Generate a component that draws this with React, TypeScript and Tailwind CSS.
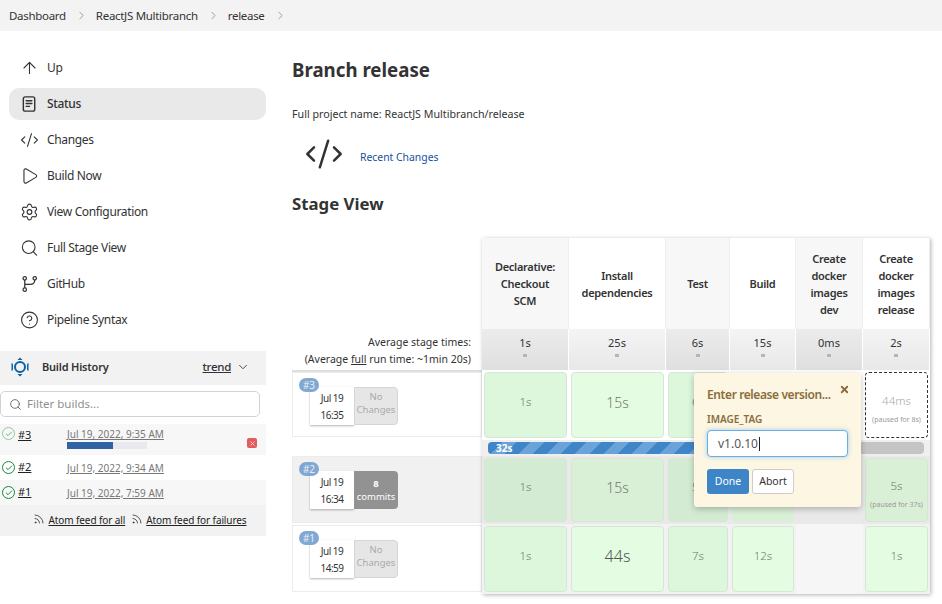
import { ArrowUp, CodeXml, Play, Settings, Search, CircleHelp, ChevronRight, ChevronDown, Rss, Check, X } from 'lucide-react';

const font = { fontFamily: '"Noto Sans", "Open Sans", sans-serif' };

function StatusIcon() {
  return (
    <svg width="20" height="20" viewBox="0 0 20 20" fill="none" stroke="#333" strokeWidth="1.5" strokeLinecap="round">
      <rect x="3.5" y="2.5" width="12" height="15" rx="2" />
      <path d="M6.5 6.5h6M6.5 9.5h6M6.5 12.5h3.5" />
    </svg>
  );
}

function BranchIcon() {
  return (
    <svg width="20" height="20" viewBox="0 0 20 20" fill="none" stroke="#333" strokeWidth="1.3">
      <circle cx="5" cy="4" r="1.8" />
      <circle cx="5" cy="16" r="1.8" />
      <circle cx="15.5" cy="4" r="1.8" />
      <path d="M5 5.8v8.4M15.5 5.8c0 3.2-2 4.7-5 4.7H5" />
    </svg>
  );
}

function HistoryIcon() {
  return (
    <svg width="20" height="20" viewBox="0 0 20 20" fill="#0b62a4">
      <circle cx="10" cy="10" r="5" fill="none" stroke="#0b62a4" strokeWidth="2" />
      <path d="M10 0.5l2.5 2.5h-5zM10 19.5l2.5-2.5h-5z" />
      <path d="M1.5 6l1.5 1v6l-1.5 1zM18.5 6l-1.5 1v6l1.5 1z" />
    </svg>
  );
}

const navItems = [
  { label: 'Up', icon: <ArrowUp size={20} strokeWidth={1.4} /> },
  { label: 'Status', icon: <StatusIcon />, active: true },
  { label: 'Changes', icon: <CodeXml size={20} strokeWidth={1.4} /> },
  { label: 'Build Now', icon: <Play size={20} strokeWidth={1.4} /> },
  { label: 'View Configuration', icon: <Settings size={20} strokeWidth={1.4} /> },
  { label: 'Full Stage View', icon: <Search size={20} strokeWidth={1.4} /> },
  { label: 'GitHub', icon: <BranchIcon /> },
  { label: 'Pipeline Syntax', icon: <CircleHelp size={20} strokeWidth={1.4} /> },
];

const stages = [
  { name: 'Declarative: Checkout SCM', avg: '1s', bg: 'bg-[#f7f7f7]' },
  { name: 'Install dependencies', avg: '25s', bg: 'bg-white' },
  { name: 'Test', avg: '6s', bg: 'bg-[#f7f7f7]' },
  { name: 'Build', avg: '15s', bg: 'bg-white' },
  { name: 'Create docker images dev', avg: '0ms', bg: 'bg-[#f7f7f7]' },
  { name: 'Create docker images release', avg: '2s', bg: 'bg-white' },
];

function Crumb({ label }: { label: string }) {
  return (
    <div className="flex items-center gap-[9px]">
      <span>{label}</span>
      <ChevronRight size={13} strokeWidth={1.5} className="text-[#8a8a8a]" />
    </div>
  );
}

function BuildRow({ num, date, pct, cancel, shaded }: { num: string; date: string; pct?: number; cancel?: boolean; shaded?: boolean }) {
  return (
    <div className={`flex ${pct ? 'h-[31px] items-start pt-[3px]' : 'h-[25px] items-center'} ${shaded ? 'bg-[#f7f7f7]' : 'bg-white'} pl-[2px] pr-[9px]`}>
      <span className={`flex h-[13px] w-[13px] shrink-0 items-center justify-center rounded-full border-[1.5px] ${pct ? 'border-[#8fc9a4]' : 'border-[#138a3d]'}`}>
        <Check size={8} strokeWidth={3} className={pct ? 'text-[#6fb488]' : 'text-[#138a3d]'} />
      </span>
      <span className="ml-[3px] w-[49px] text-[11px] text-[#222] underline">{num}</span>
      <div className="flex-1">
        <div className="text-[10px] leading-[14px] text-[#777] underline">{date}</div>
        {pct ? (
          <div className="mt-[1px] h-[7px] w-[80px] bg-[#e9eaee]">
            <div className="h-full bg-[#2f63a3]" style={{ width: `${pct}%` }} />
          </div>
        ) : null}
      </div>
      {cancel ? (
        <span className="mt-[11px] flex h-[10px] w-[10px] items-center justify-center rounded-[2px] bg-[#e25c5c]">
          <X size={7} strokeWidth={3} className="text-[#f4d6d6]" />
        </span>
      ) : null}
    </div>
  );
}

function BuildLabel({ num, time, commits, shaded, short }: { num: string; time: string; commits?: boolean; shaded?: boolean; short?: boolean }) {
  return (
    <div className={`relative ${short ? 'h-[65px]' : 'h-[67px]'} border border-[#ececec] pl-[17px] pt-[14px] ${shaded ? 'bg-[#f1f1f1]' : 'bg-white'}`}>
      <span className="absolute left-[6px] top-[5px] z-10 flex h-[14px] w-[20px] items-center justify-center rounded-full bg-[#80a8d2] text-[10px] text-[#e8eef6]">{num}</span>
      <div className="flex h-[38px] w-[88px]">
        <div className="flex w-[44px] flex-col items-center justify-center gap-[1px] bg-white text-[10px] leading-[16px] tracking-[-0.5px] text-[#333] shadow-[0_1px_2px_rgba(0,0,0,0.3)]">
          <span>Jul 19</span>
          <span>{time}</span>
        </div>
        {commits ? (
          <div className="flex w-[44px] flex-col items-center justify-center rounded-r-[4px] bg-[#929292] text-[9.5px] leading-[13px] text-white">
            <span className="font-bold">8</span>
            <span>commits</span>
          </div>
        ) : (
          <div className="flex w-[44px] flex-col items-center justify-center rounded-r-[4px] border border-[#d5d5d5] bg-[#e6e6e6] pb-[6px] text-[9.5px] leading-[13px] text-[#aaa]">
            <span>No</span>
            <span>Changes</span>
          </div>
        )}
      </div>
    </div>
  );
}

function Cell({ t, tone, size, note, dashed }: { t?: string; tone: string; size?: 'mid' | 'big'; note?: string; dashed?: boolean }) {
  const text = size === 'big' ? 'text-[16px] text-[#555]' : size === 'mid' ? 'text-[14px] text-[#6f7a6f]' : 'text-[11.5px] text-[#6f7a6f]';
  return (
    <div className="p-[2px]">
      <div
        className={`flex h-full flex-col items-center justify-center rounded-[4px] ${note ? 'pt-[8px]' : 'pb-[6px]'} ${
          dashed ? 'border border-dashed border-[#333] bg-white' : t ? 'border border-[#d6e6d4]' : ''
        } ${tone}`}
      >
        <span className={`${text} font-light ${dashed ? 'text-[#aaa]' : ''}`}>{t}</span>
        {note ? <span className="mt-[6px] text-[7px] text-[#999]">{note}</span> : null}
      </div>
    </div>
  );
}

export default function App() {
  return (
    <div style={font} className="relative h-[604px] w-[942px] overflow-hidden bg-white text-[#333]">
      <header className="flex h-[31px] items-center gap-[8px] bg-[#f3f3f3] pl-[9px] text-[11.5px] tracking-[-0.3px] text-[#333]">
        <Crumb label="Dashboard" />
        <Crumb label="ReactJS Multibranch" />
        <Crumb label="release" />
      </header>

      <div className="flex">
        <aside className="w-[266px] shrink-0">
          <nav className="pl-[9px] pt-[21px]">
            {navItems.map((item) => (
              <div
                key={item.label}
                className={`mb-[4px] flex h-[32px] items-center gap-[8px] rounded-[10px] pl-[11px] text-[12px] tracking-[-0.35px] ${
                  item.active ? 'bg-[#e9e9e9] font-medium' : ''
                }`}
              >
                <span className="flex w-[19px] justify-center">{item.icon}</span>
                <span>{item.label}</span>
              </div>
            ))}
          </nav>

          <div className="mt-[15px] flex h-[34px] items-center bg-[#f2f2f2] pb-[2px] pl-[10px] pr-[16px]">
            <HistoryIcon />
            <span className="ml-[12px] flex-1 text-[11px] font-semibold tracking-[-0.2px] text-[#333]">Build History</span>
            <span className="mr-[5px] text-[11.5px] font-medium tracking-[-0.3px] underline">trend</span>
            <ChevronDown size={14} strokeWidth={1.5} />
          </div>
          <div className="mt-[6px] flex h-[26px] w-[260px] items-center gap-[5px] rounded-[5px] border border-[#cfd3d8] pl-[8px] text-[11.5px] text-[#8f8f8f]">
            <Search size={13} strokeWidth={1.5} className="text-[#555]" />
            <span>Filter builds...</span>
          </div>
          <div className="mt-[7px]">
            <BuildRow num="#3" date="Jul 19, 2022, 9:35 AM" pct={57} cancel shaded />
            <BuildRow num="#2" date="Jul 19, 2022, 9:34 AM" />
            <BuildRow num="#1" date="Jul 19, 2022, 7:59 AM" shaded />
          </div>
          <div className="flex h-[31px] items-center justify-center gap-[6px] bg-[#f2f2f2] pl-[14px] text-[10px] tracking-[-0.1px] text-[#222]">
            <span className="flex items-center gap-[3px]">
              <Rss size={12} strokeWidth={1.5} className="mb-[3px]" />
              <span className="underline">Atom feed for all</span>
            </span>
            <span className="flex items-center gap-[3px]">
              <Rss size={12} strokeWidth={1.5} className="mb-[3px]" />
              <span className="underline">Atom feed for failures</span>
            </span>
          </div>
        </aside>

        <main className="flex-1 pl-[26px] pr-[12px] pt-[26px]">
          <h1 className="text-[18.7px] font-bold leading-[26px] text-[#333]">Branch release</h1>
          <p className="mt-[23px] text-[10.7px] leading-[16px] text-[#333]">Full project name: ReactJS Multibranch/release</p>
          <div className="mt-[12px] flex h-[40px] items-center pl-[12px]">
            <CodeXml size={40} strokeWidth={1.5} className="text-[#333]" />
            <span className="ml-[16px] mt-[8px] text-[10.4px] text-[#14519c]">Recent Changes</span>
          </div>
          <h2 className="mt-[18px] text-[16.8px] font-bold leading-[24px] text-[#333]">Stage View</h2>

          <div className="mt-[22px] flex">
            <div className="w-[190px] shrink-0">
              <div className="flex h-[132px] flex-col justify-end pb-[2px] pr-[11px] text-right text-[10.5px] leading-[17px]">
                <span>Average stage times:</span>
                <span>
                  (Average <span className="underline">full</span> run time: ~1min 20s)
                </span>
              </div>
              <div className="border-t-2 border-[#dedede]">
                <BuildLabel num="#3" time="16:35" short />
              </div>
              <div className="h-[19px]" />
              <BuildLabel num="#2" time="16:34" commits shaded />
              <div className="h-[2px]" />
              <BuildLabel num="#1" time="14:59" />
            </div>

            <div className="relative w-[448px] shrink-0 shadow-[1px_1px_4px_rgba(0,0,0,0.3)]">
              <div className="grid grid-cols-[87px_97px_64px_66px_67px_67px] grid-rows-[91px_41px]">
                {stages.map((s) => (
                  <div key={s.name} className={`flex items-center justify-center border-r border-[#eee] px-[8px] text-center text-[11px] font-semibold leading-[17px] tracking-[-0.3px] text-[#333] ${s.bg}`}>
                    {s.name}
                  </div>
                ))}
                {stages.map((s) => (
                  <div key={s.avg} className={`flex flex-col items-center border-r border-white bg-gradient-to-b pt-[6px] text-[11px] leading-[16px] text-[#333] ${s.bg === 'bg-white' ? 'from-[#f4f4f4] to-[#e8e8e8]' : 'from-[#ececec] to-[#dfdfdf]'}`}>
                    <span>{s.avg}</span>
                    <span className="mt-[3px] h-[3px] w-[4px] bg-[#b5b5b5]" />
                  </div>
                ))}
              </div>

              <div className="grid h-[70px] grid-cols-[87px_97px_64px_66px_67px_67px]">
                <Cell t="1s" tone="bg-[#dcf7dc]" />
                <Cell t="15s" size="mid" tone="bg-[#e4fde2]" />
                <Cell t="6s" tone="bg-[#dcf7dc]" />
                <Cell t="" tone="" />
                <Cell t="" tone="" />
                <Cell t="44ms" dashed tone="" note="(paused for 8s)" />
              </div>

              <div className="flex h-[16px] items-center bg-[#efefef] px-[6px]">
                <div className="h-[12px] w-full overflow-hidden rounded-[4px] bg-[#c4c4c4]">
                  <div className="flex h-full w-[300px] items-center bg-[repeating-linear-gradient(135deg,#3f86c8_0px,#3f86c8_10px,#6aa3d8_10px,#6aa3d8_20px)] pl-[8px] text-[10px] font-bold leading-none text-white">
                    32s
                  </div>
                </div>
              </div>

              <div className="grid h-[68px] grid-cols-[87px_97px_64px_66px_67px_67px] bg-[#e9e9e9]">
                <Cell t="1s" tone="bg-[#d3ebd3]" />
                <Cell t="15s" size="mid" tone="bg-[#d9f0d7]" />
                <Cell t="5s" tone="bg-[#d3ebd3]" />
                <Cell t="" tone="bg-[#d9f0d7]" />
                <div />
                <Cell t="5s" tone="bg-[#d9f0d7]" note="(paused for 37s)" />
              </div>

              <div className="grid h-[70px] grid-cols-[87px_97px_64px_66px_67px_67px] bg-[#f2f2f2]">
                <Cell t="1s" tone="bg-[#dcf7dc]" />
                <Cell t="44s" size="big" tone="bg-[#e4fde2]" />
                <Cell t="7s" tone="bg-[#dcf7dc]" />
                <Cell t="12s" tone="bg-[#e4fde2]" />
                <div className="bg-[#f6f6f6]" />
                <Cell t="1s" tone="bg-[#e4fde2]" />
              </div>

              <div className="absolute left-[212px] top-[135px] z-20 h-[134px] w-[167px] rounded-[3px] bg-[#fcf6e3] px-[13px] pt-[13px] shadow-[0_2px_6px_rgba(0,0,0,0.25)]">
                <X size={11} strokeWidth={4} className="absolute right-[11px] top-[11px] text-[#8a6d3b]" />
                <div className="text-[12px] font-semibold leading-[18px] tracking-[-0.4px] text-[#8a6d3b]">Enter release version...</div>
                <div className="mt-[8px] text-[10px] font-semibold leading-[14px] text-[#8a6d3b]">IMAGE_TAG</div>
                <div className="mt-[4px] flex h-[27px] w-[141px] items-center rounded-[4px] border border-[#66afe9] bg-white pl-[10px] text-[12px] text-[#555] shadow-[0_0_4px_rgba(102,175,233,0.6)]">
                  <span className="border-r border-[#222] pr-px leading-[14px]">v1.0.10</span>
                </div>
                <div className="mt-[12px] flex gap-[3px]">
                  <div className="flex h-[25px] w-[42px] items-center justify-center rounded-[3px] bg-[#3d85c6] text-[10.5px] text-white">Done</div>
                  <div className="flex h-[25px] w-[42px] items-center justify-center rounded-[3px] border border-[#ccc] bg-white text-[10.5px] text-[#333]">Abort</div>
                </div>
              </div>
            </div>
          </div>
        </main>
      </div>
    </div>
  );
}
